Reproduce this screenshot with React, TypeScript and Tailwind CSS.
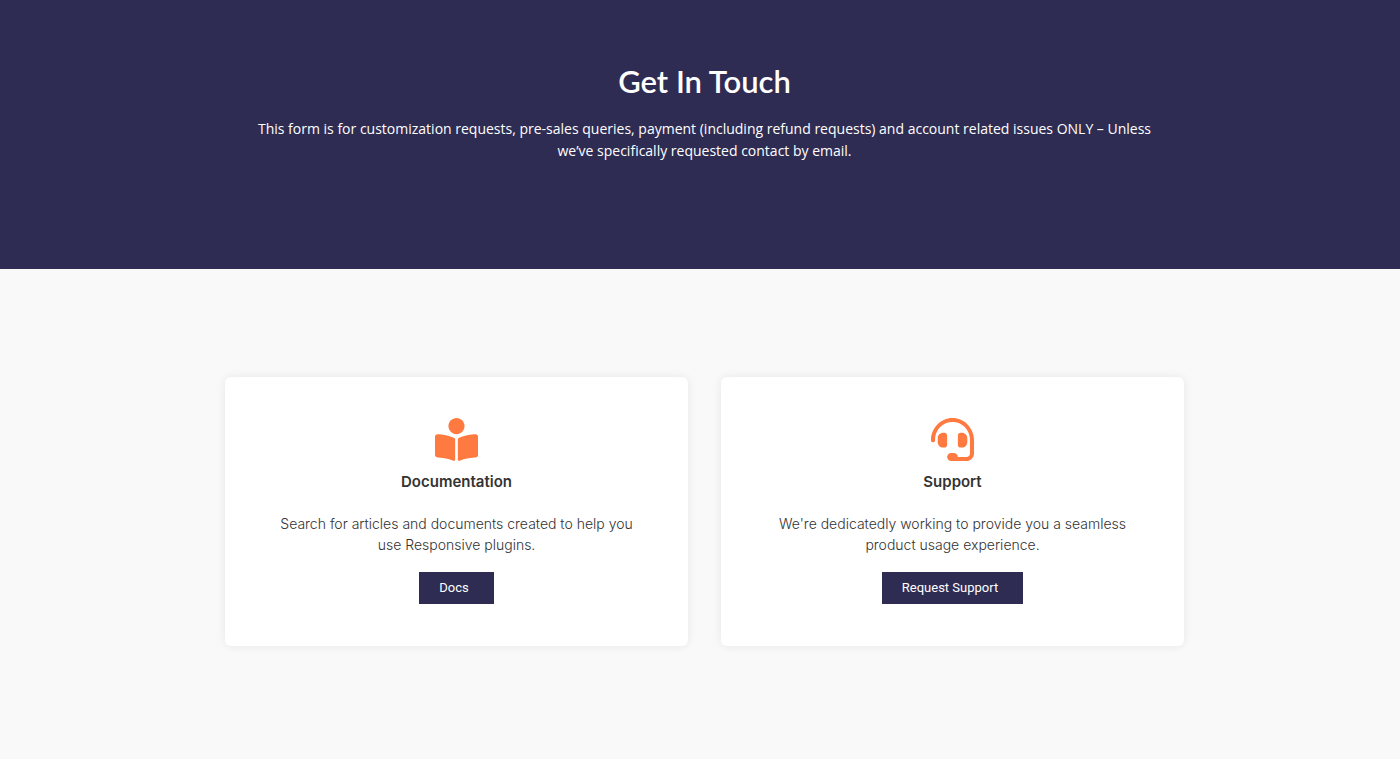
import type { IconType } from 'react-icons';
import { FaBookReader, FaHeadset } from 'react-icons/fa';

interface ContactCardProps {
  icon: IconType;
  title: string;
  text: string;
  action: string;
}

function ContactCard({ icon: Icon, title, text, action }: ContactCardProps) {
  return (
    <article className="flex flex-1 flex-col items-center rounded-md bg-white px-12 pt-[41px] pb-[42px] text-center shadow-[0_0_10px_rgba(0,0,0,0.08)]">
      <Icon className="size-[43px] text-[#ff7a40]" aria-hidden="true" />
      <h2 className="mt-[9px] text-[15px] leading-6 font-semibold text-[#333333]">{title}</h2>
      <p className="mt-[19px] max-w-[368px] text-[14px] leading-[21px] font-light text-[#333333]">{text}</p>
      <a
        href="#"
        className="mt-[17px] bg-[#2f2c53] pr-[25px] pl-5 font-['Roboto',sans-serif] text-[13px] leading-8 text-white"
      >
        {action}
      </a>
    </article>
  );
}

export default function App() {
  return (
    <main className="font-['Inter','Liberation_Sans',sans-serif]">
      <header className="bg-[#2f2c53] pt-[59px] pb-[107px] pl-[9px] text-center text-white">
        <h1 className="font-['Lato',sans-serif] text-[31px] leading-[44px] font-semibold">Get In Touch</h1>
        <p className="mx-auto mt-[15px] max-w-[920px] font-['Open_Sans',sans-serif] text-[14px] leading-[22px]">
          This form is for customization requests, pre-sales queries, payment (including refund requests) and account
          related issues ONLY – Unless we’ve specifically requested contact by email.
        </p>
      </header>

      <section className="bg-[#f9f9f9] pt-[108px] pb-[113px] pl-[9px]">
        <div className="mx-auto flex max-w-[959px] gap-[33px]">
          <ContactCard
            icon={FaBookReader}
            title="Documentation"
            text="Search for articles and documents created to help you use Responsive plugins."
            action="Docs"
          />
          <ContactCard
            icon={FaHeadset}
            title="Support"
            text="We're dedicatedly working to provide you a seamless product usage experience."
            action="Request Support"
          />
        </div>
      </section>
    </main>
  );
}
